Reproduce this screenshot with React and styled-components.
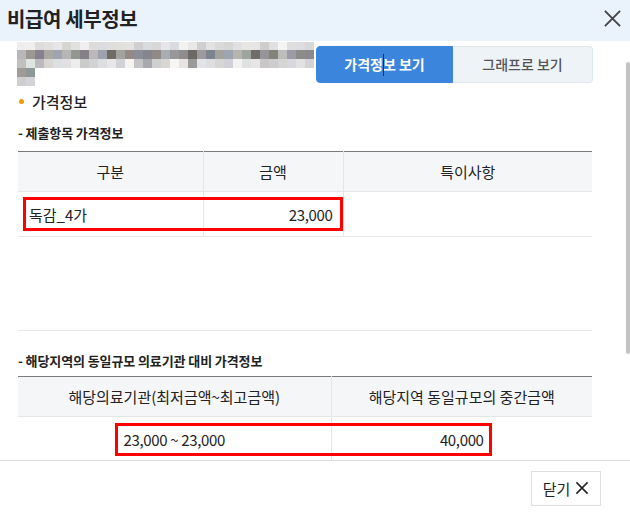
import React from "react";
import styled, { createGlobalStyle } from "styled-components";

const GlobalStyle = createGlobalStyle`
  * { box-sizing: border-box; }
  html, body { margin: 0; padding: 0; background: #fff; }
  body {
    font-family: "Noto Sans CJK KR", "Noto Sans", sans-serif;
    color: #222;
    width: 630px;
    height: 514px;
    overflow: hidden;
  }
`;

const Modal = styled.div`
  width: 630px;
  height: 514px;
  display: flex;
  flex-direction: column;
  background: #fff;
  position: relative;
`;

const Header = styled.div`
  height: 41px;
  flex: none;
  background: #eaf2fc;
  display: flex;
  align-items: center;
  justify-content: space-between;
  padding: 0 8px 0 7px;
`;

const Title = styled.h1`
  margin: 0;
  font-size: 20px;
  font-weight: 700;
  color: #222;
  letter-spacing: -0.4px;
  line-height: 1;
  padding-bottom: 4px;
`;

const CloseBtn = styled.button`
  border: 0;
  background: none;
  padding: 0;
  width: 19px;
  height: 19px;
  display: flex;
  margin-bottom: 4px;
  cursor: pointer;
`;

const Body = styled.div`
  flex: none;
  height: 419px;
  overflow: hidden;
  padding: 0 38px 0 18px;
  position: relative;
`;

const ScrollThumb = styled.div`
  position: absolute;
  right: 0;
  top: 21px;
  width: 4px;
  height: 292px;
  border-radius: 2px;
  background: #c4c4c4;
`;

const TopRow = styled.div`
  display: flex;
  align-items: flex-start;
  margin-top: 1px;
  margin-left: -1px;
`;

const Mosaic = styled.svg`
  display: block;
  flex: none;
`;

const Tabs = styled.div`
  display: flex;
  margin-top: 4px;
  margin-left: 1px;
`;

const Tab = styled.button`
  position: relative;
  height: 37px;
  width: ${(p) => (p.$active ? "137px" : "140px")};
  border: 1px solid ${(p) => (p.$active ? "#3b86dc" : "#dfe6ee")};
  border-left-width: ${(p) => (p.$active ? "1px" : "0")};
  background: ${(p) => (p.$active ? "#3b86dc" : "#eef3f8")};
  color: ${(p) => (p.$active ? "#fff" : "#555")};
  border-radius: ${(p) => (p.$active ? "4px 0 0 4px" : "0 4px 4px 0")};
  font-family: inherit;
  font-size: 14px;
  font-weight: ${(p) => (p.$active ? 700 : 500)};
  padding: 0;
  padding-bottom: 1px;
  cursor: pointer;
`;

const Caret = styled.span`
  position: absolute;
  left: 66px;
  top: 7px;
  width: 1px;
  height: 22px;
  background: #1d2a44;
`;

const SectionTitle = styled.div`
  display: flex;
  align-items: center;
  gap: 8px;
  margin-top: 6px;
  margin-left: 1px;
  line-height: 20px;
  font-size: 15px;
  font-weight: 500;
  color: #222;
`;

const Dot = styled.span`
  width: 5px;
  height: 5px;
  border-radius: 50%;
  background: #f39800;
  margin-top: -1px;
`;

const SubTitle = styled.div`
  margin-top: ${(p) => p.$mt}px;
  line-height: 20px;
  font-size: 13px;
  font-weight: 700;
  color: #222;
  letter-spacing: -0.1px;
`;

const TableBox = styled.div`
  position: relative;
  margin-top: ${(p) => p.$mt}px;
  height: ${(p) => (p.$h ? `${p.$h}px` : "auto")};
  border-bottom: ${(p) => (p.$line ? "1px solid #e8e8e8" : "0")};
`;

const Table = styled.table`
  width: 100%;
  border-collapse: collapse;
  table-layout: fixed;
  border-top: 1px solid #7a7a7a;
  font-size: 15px;
  color: #222;
`;

const Th = styled.th`
  height: 40px;
  background: #f5f6f8;
  font-weight: 400;
  border-bottom: 1px solid #e6e6e6;
  border-left: 1px solid #e6e6e6;
  padding: 0 0 1px;
  &:first-child { border-left: 0; }
`;

const Td = styled.td`
  height: 45px;
  border-bottom: 1px solid #e6e6e6;
  border-left: 1px solid #e6e6e6;
  text-align: ${(p) => p.$align || "center"};
  letter-spacing: ${(p) => (p.$num ? "-0.35px" : "0")};
  padding: ${(p) => (p.$align === "left" ? "0 0 0 11px" : p.$align === "right" ? "0 10px 0 0" : "0")};
  &:first-child { border-left: 0; }
`;

const Highlight = styled.div`
  position: absolute;
  left: ${(p) => p.$x}px;
  top: ${(p) => p.$y}px;
  width: ${(p) => p.$w}px;
  height: ${(p) => p.$h}px;
  border: 3px solid #ff0000;
  pointer-events: none;
`;

const Footer = styled.div`
  flex: 1;
  border-top: 1px solid #dcdcdc;
  display: flex;
  justify-content: flex-end;
  align-items: flex-start;
  padding: 10px 29px 0 0;
`;

const FooterBtn = styled.button`
  height: 35px;
  width: 70px;
  border: 1px solid #dfdfdf;
  background: #fff;
  display: flex;
  align-items: center;
  justify-content: center;
  gap: 5px;
  font-family: inherit;
  font-size: 15px;
  color: #222;
  padding: 0 0 1px;
  cursor: pointer;
`;

const rows = [
  { y: 0, h: 8, colors: "eeeeee f0efee dcdcdc e2e0de e6e6ea d6d6d0 e0e2e0 f0eef0 dcdcd8 dcdce0 e0dedc e2e0dc e4e2e0 d0cfd2 d8dbe0 d8d8d8 e6e6ea d8dce0 f2f2f0 e8e8e6 d0cfd0 e2e2e4 dadada d6d6d4 e0e0e4 e8e6e2 e6e6e4 cfcccc e0dfe4 f4f4f2 e0dfe0 dedde2 d8d8d8" },
  { y: 8, h: 9, colors: "b8b8b8 9a9890 878090 aaa8a2 a0a4ae b6b6b6 8f978e 857f88 bab8b8 9ea2ae 706b66 a4a29e 938a84 8b8e98 858590 8f8a86 a8acb4 989898 908c8e 6b6866 9c9a9c 7c8490 a4a29c 9ea4b0 b8b4ae 9ea4a0 706c6a 969498 828478 bcbcbc 9c9aa4 8e8c8a 8a8a8c" },
  { y: 17, h: 9, colors: "c2c0be dfe5e0 bbbbbf d8d5d3 dde0e2 e2e0e2 eeedee cccbcb d2d3d6 dddedf e8e6e8 d2d2d6 f6f4ee c4c3c6 a8a9ac cfcfcf d8d6d2 f8f6f4 e8e2e0 9a9a9a e2e4ea dcdee0 d6d6d4 d0d0d8 f2f2f2 e0e2e2 e8e6e4 c8c6c8 cdcdd0 d4d6d4 d8d8dc e2e2e2 d4d2d4" },
  { y: 26, h: 9, colors: "a09b96 8e9896" },
  { y: 35, h: 9, colors: "d0cdd0 d4d4d8" },
];

function BlurredTitle() {
  return (
    <Mosaic width="298" height="44" viewBox="0 0 298 44" aria-hidden="true">
      {rows.map((r) =>
        r.colors.split(" ").map((c, i) => (
          <rect key={`${r.y}-${i}`} x={i * 9} y={r.y} width="9" height={r.h} fill={`#${c}`} />
        ))
      )}
    </Mosaic>
  );
}

function XIcon({ size, stroke, color }) {
  return (
    <svg width={size} height={size} viewBox="0 0 20 20" fill="none">
      <path d="M2 2 L18 18 M18 2 L2 18" stroke={color} strokeWidth={stroke} strokeLinecap="butt" />
    </svg>
  );
}

export default function App() {
  return (
    <>
      <GlobalStyle />
      <Modal>
        <Header>
          <Title>비급여 세부정보</Title>
          <CloseBtn aria-label="닫기">
            <XIcon size={19} stroke={2} color="#444" />
          </CloseBtn>
        </Header>
        <Body>
          <TopRow>
            <BlurredTitle />
            <Tabs>
              <Tab $active>
                가격정보 보기
                <Caret />
              </Tab>
              <Tab>그래프로 보기</Tab>
            </Tabs>
          </TopRow>

          <SectionTitle>
            <Dot />
            가격정보
          </SectionTitle>

          <SubTitle $mt={11}>- 제출항목 가격정보</SubTitle>
          <TableBox $mt={8} $h={180} $line>
            <Table>
              <colgroup>
                <col style={{ width: 185 }} />
                <col style={{ width: 140 }} />
                <col />
              </colgroup>
              <thead>
                <tr>
                  <Th>구분</Th>
                  <Th>금액</Th>
                  <Th>특이사항</Th>
                </tr>
              </thead>
              <tbody>
                <tr>
                  <Td $align="left">독감_4가</Td>
                  <Td $align="right" $num>23,000</Td>
                  <Td />
                </tr>
              </tbody>
            </Table>
            <Highlight $x={5} $y={46} $w={320} $h={34} />
          </TableBox>

          <SubTitle $mt={20}>- 해당지역의 동일규모 의료기관 대비 가격정보</SubTitle>
          <TableBox $mt={5}>
            <Table>
              <colgroup>
                <col style={{ width: 313 }} />
                <col />
              </colgroup>
              <thead>
                <tr>
                  <Th>해당의료기관(최저금액~최고금액)</Th>
                  <Th>해당지역 동일규모의 중간금액</Th>
                </tr>
              </thead>
              <tbody>
                <tr>
                  <Td $num>23,000 ~ 23,000</Td>
                  <Td $num>40,000</Td>
                </tr>
              </tbody>
            </Table>
            <Highlight $x={97} $y={47} $w={377} $h={33} />
          </TableBox>
          <ScrollThumb />
        </Body>
        <Footer>
          <FooterBtn>
            닫기
            <XIcon size={14} stroke={2.2} color="#222" />
          </FooterBtn>
        </Footer>
      </Modal>
    </>
  );
}
